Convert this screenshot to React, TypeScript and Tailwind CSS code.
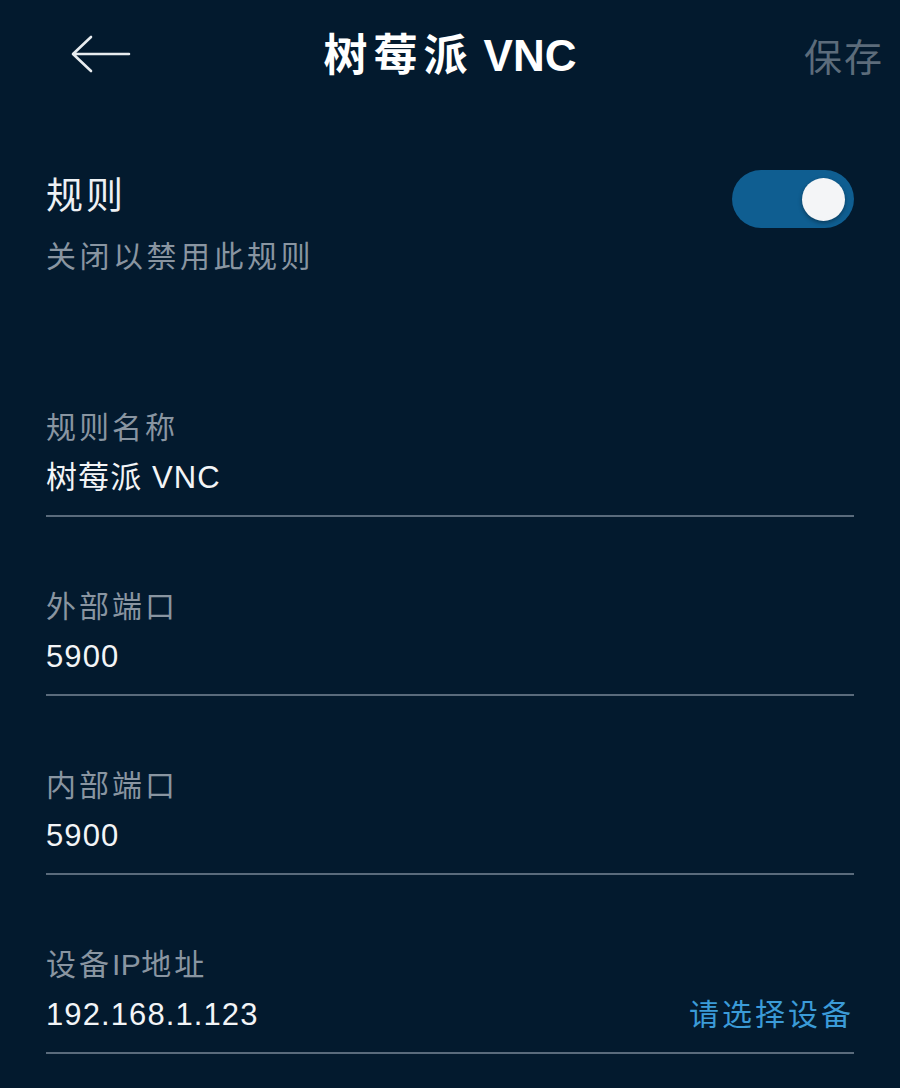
import React, { useState } from "react";

const cjk = { fontFamily: '"Liberation Sans", "Noto Sans CJK SC", sans-serif' };

type FieldProps = {
  label: React.ReactNode;
  value: string;
  action?: string;
};

const Field: React.FC<FieldProps> = ({ label, value, action }) => (
  <div className="pt-[70px] pb-[17px] border-b-2 border-[#5a6b7c]">
    <div className="text-[30px] leading-[40px] tracking-[3px] text-[#8995a1]">{label}</div>
    <div className="mt-[10px] flex items-center justify-between">
      <span className="text-[31px] leading-[40px] tracking-[1.1px] text-[#f3f5f7]">{value}</span>
      {action && (
        <span className="text-[30px] leading-[40px] tracking-[3px] text-[#3b9bd8]">{action}</span>
      )}
    </div>
  </div>
);

export default function App() {
  const [enabled, setEnabled] = useState(true);

  return (
    <div className="min-h-[1088px] w-full bg-[#031a2e]" style={cjk}>
      {/* Top bar */}
      <div className="grid h-[112px] grid-cols-[1fr_auto_1fr] items-center">
        <div className="pl-[70px]">
          <svg width="62" height="42" viewBox="0 0 62 42" fill="none">
            <path
              d="M59 19H4M21 2 3 19l18 17"
              stroke="#e8ecef"
              strokeWidth="2.6"
              strokeLinecap="round"
              strokeLinejoin="round"
            />
          </svg>
        </div>
        <h1 className="flex items-baseline text-[44px] font-semibold leading-none text-white">
          <span className="tracking-[6px]">树莓派</span>
          <span className="ml-[10px]">VNC</span>
        </h1>
        <div className="flex justify-end pr-[16px] pt-[4px]">
          <span className="text-[38px] tracking-[2px] text-[#5c6c7b]">保存</span>
        </div>
      </div>

      <div className="px-[46px]">
        {/* Rule toggle */}
        <div className="flex items-start justify-between pt-[63px]">
          <div>
            <div className="text-[37px] leading-[44px] tracking-[3px] text-[#eef1f4]">规则</div>
            <div className="mt-[18px] text-[30px] leading-[40px] tracking-[3.5px] text-[#8995a1]">
              关闭以禁用此规则
            </div>
          </div>
          <button
            onClick={() => setEnabled(!enabled)}
            className={`mt-[-5px] flex h-[58px] w-[122px] items-center rounded-full px-[9px] ${
              enabled ? "justify-end bg-[#0f5e91]" : "justify-start bg-[#3a4b5c]"
            }`}
          >
            <span className="h-[43px] w-[43px] rounded-full bg-[#f4f5f7] shadow-[0_2px_4px_rgba(0,0,0,0.35)]" />
          </button>
        </div>

        <div className="mt-[61px]">
          <Field label="规则名称" value="树莓派 VNC" />
          <Field label="外部端口" value="5900" />
          <Field label="内部端口" value="5900" />
          <Field
            label={
              <>
                设备<span className="tracking-[0.5px]">IP</span>地址
              </>
            }
            value="192.168.1.123"
            action="请选择设备"
          />
        </div>
      </div>
    </div>
  );
}
